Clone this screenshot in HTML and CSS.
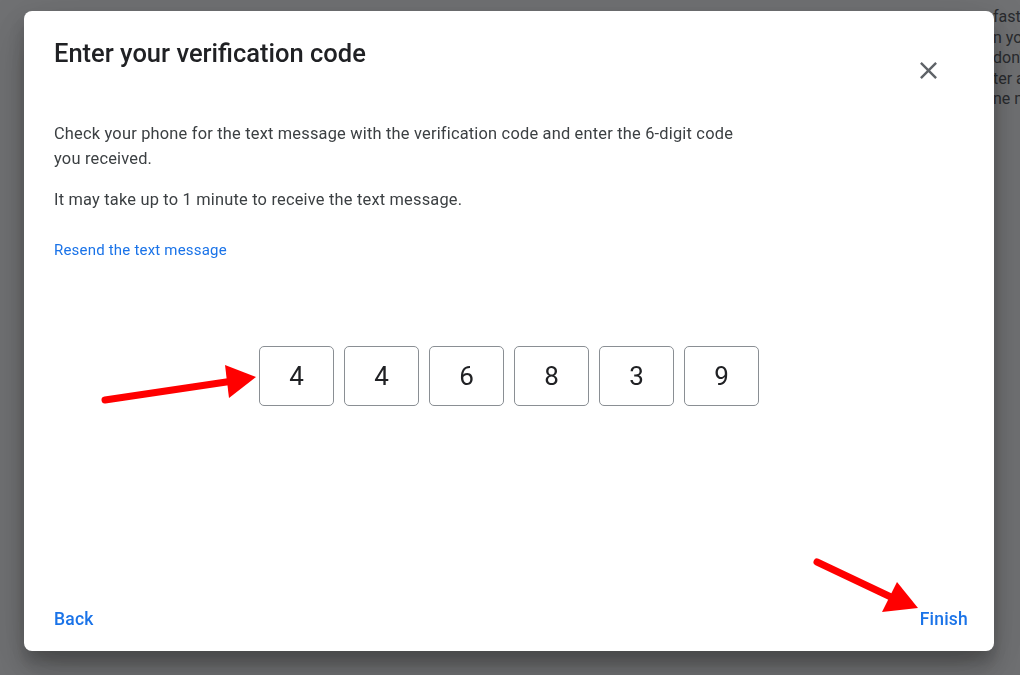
FILE: index.html
```html
<!DOCTYPE html>
<html>
<head>
<meta charset="utf-8">
<link rel="stylesheet" href="styles.css">
</head>
<body>
<div class="page">
  <div class="page-text">
    <p>faster</p>
    <p>n your</p>
    <p>don't</p>
    <p>ter a</p>
    <p>ne n</p>
  </div>
</div>
<div class="scrim">
  <div class="dialog">
    <div class="head">
      <h1 class="title">Enter your verification code</h1>
      <button class="close" aria-label="Close">
        <svg width="29" height="29" viewBox="0 0 24 24"><path d="M19 6.41 17.59 5 12 10.59 6.41 5 5 6.41 10.59 12 5 17.59 6.41 19 12 13.41 17.59 19 19 17.59 13.41 12z" fill="#5f6368"/></svg>
      </button>
    </div>
    <p class="text">Check your phone for the text message with the verification code and enter the 6-digit code you received.</p>
    <p class="text second">It may take up to 1 minute to receive the text message.</p>
    <a class="resend" href="#">Resend the text message</a>
    <div class="code">
      <div class="digit">4</div>
      <div class="digit">4</div>
      <div class="digit">6</div>
      <div class="digit">8</div>
      <div class="digit">3</div>
      <div class="digit">9</div>
    </div>
    <div class="actions">
      <button class="btn">Back</button>
      <button class="btn">Finish</button>
    </div>
  </div>
</div>
<svg class="arrows" width="1020" height="675" viewBox="0 0 1020 675">
  <line x1="105" y1="400" x2="233" y2="381" stroke="#ff0000" stroke-width="7" stroke-linecap="round"/>
  <polygon points="225,365 256,377 229,398" fill="#ff0000"/>
  <line x1="817" y1="562" x2="893" y2="598" stroke="#ff0000" stroke-width="7" stroke-linecap="round"/>
  <polygon points="897,582 918,608 882,612" fill="#ff0000"/>
</svg>
</body>
</html>
```
FILE: styles.css
```css
html, body {
  margin: 0;
  padding: 0;
  width: 1020px;
  height: 675px;
  overflow: hidden;
}
body {
  background: #ffffff;
  font-family: Roboto, "Liberation Sans", sans-serif;
}
.page {
  padding: 7px 0 0 993px;
}
.page-text {
  font-size: 16px;
  line-height: 20.5px;
  color: #3c4043;
  white-space: nowrap;
}
.page-text p {
  margin: 0;
}
.scrim {
  position: fixed;
  inset: 0;
  background: rgba(32, 33, 36, 0.64);
  padding: 11px 26px 0 24px;
}
.dialog {
  width: 970px;
  height: 640px;
  box-sizing: border-box;
  background: #ffffff;
  border-radius: 8px;
  box-shadow: 0 11px 15px rgba(0,0,0,0.2), 0 24px 38px rgba(0,0,0,0.14), 0 9px 46px rgba(0,0,0,0.12);
  padding: 26px 26px 14px 30px;
  display: flex;
  flex-direction: column;
}
.head {
  display: flex;
  justify-content: space-between;
  align-items: flex-start;
}
.title {
  margin: 0;
  font-size: 25.5px;
  line-height: 32px;
  font-weight: 500;
  color: #202124;
}
.close {
  border: none;
  background: none;
  padding: 0;
  margin: 19px 25px 0 0;
  width: 29px;
  height: 29px;
  cursor: pointer;
}
.close svg {
  display: block;
}
.text {
  margin: 36px 0 0;
  width: 684px;
  font-size: 16.4px;
  line-height: 25px;
  color: #3c4043;
  letter-spacing: 0.2px;
}
.text.second {
  margin-top: 16px;
}
.resend {
  margin-top: 28px;
  align-self: flex-start;
  font-size: 15px;
  line-height: 20px;
  color: #1a73e8;
  text-decoration: none;
  letter-spacing: 0.2px;
}
.code {
  margin-top: 86px;
  margin-left: -4px;
  display: flex;
  justify-content: center;
  gap: 10px;
}
.digit {
  width: 75px;
  height: 60px;
  box-sizing: border-box;
  border: 1px solid #8a8f94;
  border-radius: 5px;
  display: flex;
  align-items: center;
  justify-content: center;
  font-size: 26px;
  color: #202124;
}
.actions {
  margin-top: auto;
  display: flex;
  justify-content: space-between;
}
.btn {
  border: none;
  background: none;
  padding: 0;
  font-family: Roboto, "Liberation Sans", sans-serif;
  font-size: 17.5px;
  font-weight: 500;
  line-height: 36px;
  color: #1a73e8;
  letter-spacing: 0.2px;
  cursor: pointer;
}
.arrows {
  position: fixed;
  left: 0;
  top: 0;
  pointer-events: none;
}
```
